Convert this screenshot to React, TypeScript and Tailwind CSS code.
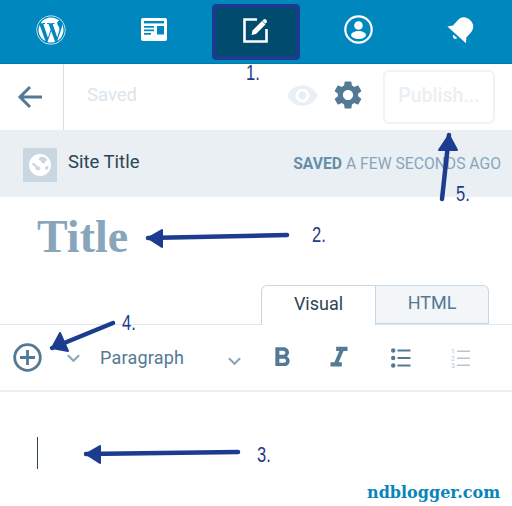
import React from "react";
import { FaWordpress } from "react-icons/fa";
import { MdFormatBold, MdFormatItalic, MdSettings, MdVisibility } from "react-icons/md";

function Chevron({ className }: { className: string }) {
  return (
    <svg viewBox="0 0 16 10" className={className} fill="none" stroke="#87a6bc" strokeWidth="2.2">
      <path d="M2 2l6 6 6-6" />
    </svg>
  );
}

function Newspaper() {
  return (
    <svg width="26" height="24" viewBox="0 0 26 24">
      <rect x="0" y="0" width="26" height="23" rx="2" fill="#fff" />
      <g fill="#0087be">
        <rect x="3" y="3" width="20" height="2.4" />
        <rect x="3" y="8" width="10" height="1.7" />
        <rect x="3" y="11.5" width="10" height="1.7" />
        <rect x="3" y="15" width="7" height="1.7" />
        <rect x="16" y="8" width="7" height="8.5" />
      </g>
    </svg>
  );
}

function EditIcon() {
  return (
    <svg width="28" height="28" viewBox="0 0 28 28" fill="none">
      <path d="M15 3.5H2.5v22h22V13" stroke="#fff" strokeWidth="2.6" />
      <path d="M9.5 19l1-4.500L20 5l3.500 3.500L14 18z" fill="#fff" />
      <path d="M21.300 3.700a2 2 0 0 1 2.800 0l.3.3a2 2 0 0 1 0 2.800l-1 .9-3-3z" fill="#fff" />
    </svg>
  );
}

function Person() {
  return (
    <svg width="29" height="29" viewBox="0 0 29 29" fill="none">
      <circle cx="14.500" cy="14.500" r="13.200" stroke="#fff" strokeWidth="2.200" />
      <circle cx="14.500" cy="10.500" r="4.300" fill="#fff" />
      <ellipse cx="14.500" cy="20" rx="7.500" ry="4" fill="#fff" />
    </svg>
  );
}

function Bell() {
  return (
    <svg width="30" height="30" viewBox="0 0 30 30">
      <g transform="rotate(42 15 15)" fill="#fff">
        <path d="M15 1.500c-6 0-9 4-9 9V17l-3.500 4.500h25L24 17v-6.500c0-5-3-9-9-9z" />
        <path d="M12.500 23.500h5a2.500 2.500 0 0 1-5 0z" />
      </g>
    </svg>
  );
}

function Globe() {
  return (
    <svg width="22" height="22" viewBox="0 0 22 22">
      <circle cx="11" cy="11" r="11" fill="#fff" />
      <g fill="#c8d7e1">
        <path d="M11 3c3-1 6 .5 7.500 3l-2 1-1 2.500-2.500-.5-1-2-2.500-1.500z" />
        <path d="M3 9l3 .5 2 2.500 3 1 .5 2-2.500 1.500-2-1-1-3-2.500-1.500z" />
        <path d="M16 13l3-1 .5 2-2.500 2.500z" />
      </g>
    </svg>
  );
}

function BulletList() {
  return (
    <svg width="20" height="20" viewBox="0 0 20 20" fill="#537994">
      <circle cx="2.200" cy="2.500" r="2.200" />
      <circle cx="2.200" cy="10" r="2.200" />
      <circle cx="2.200" cy="17.500" r="2.200" />
      <rect x="6.500" y="1.500" width="13" height="2" />
      <rect x="6.500" y="9" width="13" height="2" />
      <rect x="6.500" y="16.500" width="13" height="2" />
    </svg>
  );
}

function NumberList() {
  return (
    <svg width="20" height="24" viewBox="0 0 20 24" fill="#b4c6d3">
      <text x="0" y="8" fontSize="7" fontFamily="Roboto, sans-serif">1</text>
      <text x="0" y="15" fontSize="7" fontFamily="Roboto, sans-serif">2</text>
      <text x="0" y="21.500" fontSize="7" fontFamily="Roboto, sans-serif">3</text>
      <rect x="6" y="4.500" width="13" height="1.500" />
      <rect x="6" y="11.500" width="13" height="1.500" />
      <rect x="6" y="18.500" width="13" height="1.500" />
    </svg>
  );
}

function Arrow({ tail, tip, a, b }: { tail: string; tip: string; a: string; b: string }) {
  return (
    <g>
      <path d={`M${tail}L${tip}`} stroke="#1c3d8f" strokeWidth="4.500" strokeLinecap="round" fill="none" />
      <path d={`M${tip}L${a}L${b}Z`} fill="#1c3d8f" stroke="#1c3d8f" strokeWidth="2" strokeLinejoin="round" />
    </g>
  );
}

function Note({ className, children }: { className: string; children: React.ReactNode }) {
  return (
    <span
      className={`absolute origin-left scale-x-75 font-['Liberation_Sans',sans-serif] text-[22px] leading-none text-[#1f3a8a] ${className}`}
    >
      {children}
    </span>
  );
}

export default function App() {
  return (
    <div className="relative flex h-[506px] w-[512px] flex-col overflow-hidden bg-white font-['Roboto',sans-serif]">
      <header className="grid h-16 shrink-0 grid-cols-5 items-center justify-items-center border-b border-[#0079ab] bg-[#0087be]">
        <div className="pb-1">
          <FaWordpress className="h-[30px] w-[30px] text-white" />
        </div>
        <div className="pb-1">
          <Newspaper />
        </div>
        <div className="flex h-14 w-[88px] items-center justify-center rounded-sm border-4 border-[#1c3d8f] bg-[#004b6e] pb-1">
          <EditIcon />
        </div>
        <div className="pb-1">
          <Person />
        </div>
        <div className="pb-1">
          <Bell />
        </div>
      </header>

      <div className="flex h-[68px] shrink-0 items-stretch border-b-2 border-[#e9eff3]">
        <div className="flex w-[64px] shrink-0 items-center justify-center border-r border-[#d5e0e8] pr-1">
          <svg width="26" height="24" viewBox="0 0 26 24" fill="none" stroke="#537994" strokeWidth="3">
            <path d="M25 12H3M13 2L3 12l10 10" />
          </svg>
        </div>
        <span className="mb-[2px] ml-[23px] self-center text-[18.500px] text-[#dbe5ec]">Saved</span>
        <MdVisibility className="mb-[4px] ml-auto h-[33px] w-[33px] self-center text-[#e9eff3]" />
        <MdSettings className="mb-[4px] ml-[12px] h-[34px] w-[34px] self-center text-[#537994]" />
        <button className="my-[6px] ml-[18px] mr-[17px] w-[112px] rounded-md border-2 border-[#eef3f6] pb-[2px] text-[19.500px] font-medium text-[#e9eff3]">
          Publish...
        </button>
      </div>

      <div className="flex h-[65px] shrink-0 items-center bg-[#e9eff3] pl-[23px] pr-[11px]">
        <div className="flex h-[34px] w-[34px] items-center justify-center bg-[#c8d7e1]">
          <Globe />
        </div>
        <span className="mb-[3px] ml-[11px] text-[18.500px] text-[#2e4453]">Site Title</span>
        <span className="mb-[2px] ml-auto text-[15.700px] text-[#87a6bc]">
          <b className="font-bold text-[#668eaa]">SAVED</b> A FEW SECONDS AGO
        </span>
      </div>

      <div className="flex h-[128px] shrink-0 flex-col border-b border-[#dfe8ee]">
        <h1 className="ml-[37px] mt-[12px] font-['Liberation_Serif',serif] text-[46px] font-bold leading-[56px] text-[#87a6bc]">
          Title
        </h1>
        <div className="mr-[23px] mt-auto flex self-end text-[18px]">
          <div className="-mb-px flex h-[40px] w-[115px] items-center justify-center rounded-tl-md border border-b-0 border-[#c8d7e1] bg-white pb-[5px] text-[#2e4453]">
            Visual
          </div>
          <div className="flex h-[39px] w-[113px] items-center justify-center rounded-tr-md border border-l-0 border-[#c8d7e1] bg-[#f3f6f8] pb-[5px] text-[#537994]">
            HTML
          </div>
        </div>
      </div>

      <div className="flex h-[67px] shrink-0 items-center border-b-2 border-[#e9eff3]">
        <svg width="29" height="29" viewBox="0 0 29 29" fill="none" stroke="#537994" strokeWidth="2.800" className="ml-[13px]">
          <circle cx="14.500" cy="14.500" r="12.800" />
          <path d="M14.500 7v15M7 14.500h15" />
        </svg>
        <Chevron className="ml-[24px] h-[10px] w-[15px]" />
        <span className="ml-[19px] text-[18px] tracking-[0.2px] text-[#537994]">Paragraph</span>
        <Chevron className="ml-[43px] mt-[6px] h-[10px] w-[15px]" />
        <MdFormatBold className="ml-[24px] h-[32px] w-[32px] text-[#537994]" />
        <MdFormatItalic className="ml-[24px] h-[34px] w-[34px] text-[#537994]" />
        <span className="ml-[35px] flex">
          <BulletList />
        </span>
        <span className="ml-[40px] flex">
          <NumberList />
        </span>
      </div>

      <div className="flex-1 pl-[37px] pt-[45px]">
        <div className="h-[32px] w-px bg-[#2e4453]" />
      </div>

      <span className="absolute left-[367px] top-[482px] font-['DejaVu_Serif',serif] text-[16px] font-bold leading-[22px] text-[#0a85b8]">
        ndblogger.com
      </span>

      <svg className="pointer-events-none absolute left-0 top-0" width="512" height="506">
        <Arrow tail="287,235" tip="148,238" a="162,230" b="162,247" />
        <Arrow tail="238,452" tip="86,454" a="100,446" b="100,463" />
        <Arrow tail="113,323" tip="52,348" a="60,333" b="68,351" />
        <Arrow tail="442,199" tip="449,135" a="439,150" b="457,150" />
      </svg>

      <Note className="left-[246px] top-[62px]">1.</Note>
      <Note className="left-[312px] top-[224px]">2.</Note>
      <Note className="left-[257px] top-[444px]">3.</Note>
      <Note className="left-[122px] top-[312px]">4.</Note>
      <Note className="left-[456px] top-[183px]">5.</Note>
    </div>
  );
}
